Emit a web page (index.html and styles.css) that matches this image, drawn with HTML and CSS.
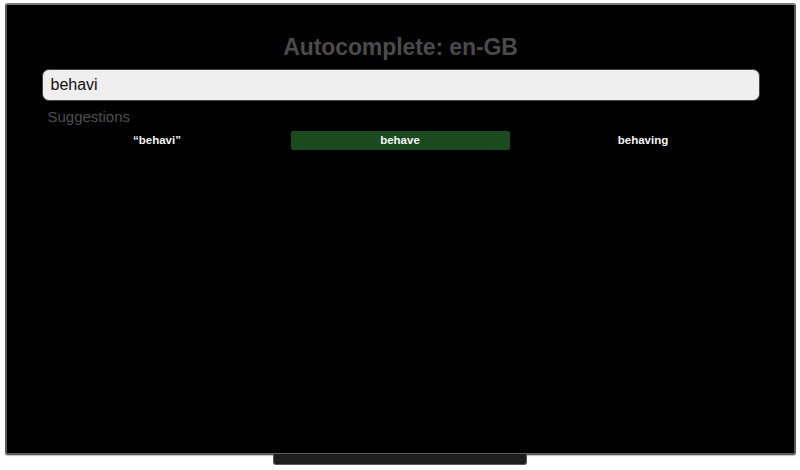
FILE: index.html
```html
<!DOCTYPE html>
<html>
<head>
<meta charset="utf-8">
<link rel="stylesheet" href="styles.css">
</head>
<body>
<div class="tv">
  <div class="screen">
    <h1 class="title">Autocomplete: en-GB</h1>
    <div class="input">behavi</div>
    <div class="label">Suggestions</div>
    <div class="suggestions">
      <div class="sugg">“behavi”</div>
      <div class="sugg active">behave</div>
      <div class="sugg">behaving</div>
    </div>
  </div>
</div>
<div class="stand"></div>
</body>
</html>
```
FILE: styles.css
```css
html, body {
  margin: 0;
  padding: 0;
  background: #ffffff;
  font-family: "Liberation Sans", Arial, sans-serif;
}
body {
  width: 800px;
  height: 470px;
  display: flex;
  flex-direction: column;
  align-items: center;
  padding-top: 3px;
  box-sizing: border-box;
}
.tv {
  width: 791px;
  height: 452px;
  box-sizing: border-box;
  border: 2px solid #5a5a5a;
  border-top-color: #7a7a7a;
  border-radius: 3px;
  background: #000;
  box-shadow: 0 1px 1px rgba(0,0,0,0.25);
}
.screen {
  display: flex;
  flex-direction: column;
  padding: 0 34px 0 35px;
}
.title {
  margin: 28px 0 0;
  height: 28px;
  line-height: 28px;
  text-align: center;
  font-size: 23px;
  font-weight: bold;
  color: #4b4b4b;
  letter-spacing: -0.1px;
}
.input {
  margin-top: 8px;
  height: 32px;
  box-sizing: border-box;
  border: 1px solid #444;
  border-radius: 7px;
  background: #efefef;
  padding: 0 8px;
  line-height: 30px;
  font-size: 16px;
  color: #111;
}
.label {
  margin: 6px 0 0 6px;
  height: 20px;
  line-height: 20px;
  font-size: 15px;
  color: #4f4f4f;
}
.suggestions {
  margin: 4px 6px 0 6px;
  display: grid;
  grid-template-columns: repeat(3, 219px);
  column-gap: 24px;
}
.sugg {
  height: 19px;
  line-height: 19px;
  text-align: center;
  font-size: 11.5px;
  font-weight: bold;
  color: #f4f4f4;
  border-radius: 2px;
}
.sugg.active {
  background: #1a4a1e;
}
.stand {
  width: 254px;
  height: 11px;
  margin-top: -1px;
  box-sizing: border-box;
  background: #1e1e1e;
  border: 1px solid #5a5a5a;
  border-top: none;
  border-radius: 0 0 3px 3px;
}
```
